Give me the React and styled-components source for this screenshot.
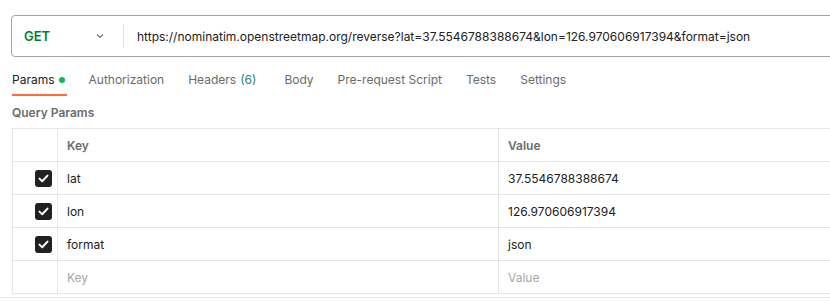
import React from "react";
import styled, { createGlobalStyle } from "styled-components";

const Global = createGlobalStyle`
  html, body { margin: 0; padding: 0; background: #ffffff; }
  body { font-family: Inter, "Noto Sans", sans-serif; color: #212121; overflow: hidden; }
  * { box-sizing: border-box; }
`;

const Page = styled.div`
  width: 830px;
  height: 302px;
  overflow: hidden;
`;

const UrlBar = styled.div`
  margin: 15px 0 0 11px;
  width: 840px;
  height: 42px;
  border: 1px solid #a6a6a6;
  border-radius: 4px;
  display: flex;
  align-items: center;
`;

const Method = styled.div`
  width: 111px;
  display: flex;
  align-items: center;
  justify-content: space-between;
  padding: 0 18px 0 12px;
  font-size: 13px;
  font-weight: 600;
  color: #007f31;
`;

const Divider = styled.div`
  width: 1px;
  height: 24px;
  background: #e0e0e0;
`;

const UrlText = styled.div`
  padding-left: 13px;
  font-size: 12px;
  color: #212121;
  white-space: nowrap;
`;

const Tabs = styled.div`
  display: flex;
  margin-top: 7px;
`;

const Tab = styled.div`
  position: relative;
  padding: 8px 12px 9px;
  padding-left: ${(p) => (p.$wide ? "16px" : "12px")};
  font-size: 12px;
  line-height: 15px;
  color: ${(p) => (p.$active ? "#212121" : "#6b6b6b")};
  display: flex;
  align-items: center;
  &::after {
    content: "";
    display: ${(p) => (p.$active ? "block" : "none")};
    position: absolute;
    left: 12px;
    right: 10px;
    bottom: 0;
    height: 2px;
    background: #ff6c37;
  }
`;

const Dot = styled.span`
  width: 6px;
  height: 6px;
  border-radius: 50%;
  background: #0cbb52;
  margin-left: 4px;
`;

const Count = styled.span`
  color: #2f7f72;
  margin-left: 4px;
`;

const SectionTitle = styled.div`
  margin: 9px 0 0 12px;
  font-size: 12px;
  font-weight: 600;
  line-height: 16px;
  color: #6b6b6b;
`;

const Table = styled.div`
  margin: 7px 0 0 12px;
  width: 840px;
  border-top: 1px solid #e6e6e6;
  border-left: 1px solid #e6e6e6;
`;

const Row = styled.div`
  display: grid;
  grid-template-columns: 45px 441px 1fr;
  height: 33px;
  border-bottom: 1px solid #e6e6e6;
`;

const Cell = styled.div`
  display: flex;
  align-items: center;
  padding-left: ${(p) => (p.$check ? "0" : "9px")};
  justify-content: ${(p) => (p.$check ? "flex-end" : "flex-start")};
  padding-right: ${(p) => (p.$check ? "5px" : "0")};
  border-right: ${(p) => (p.$last ? "none" : "1px solid #e6e6e6")};
  font-size: 12px;
  font-weight: ${(p) => (p.$head ? 600 : 400)};
  color: ${(p) => (p.$head ? "#6b6b6b" : p.$placeholder ? "#a6a6a6" : "#212121")};
`;

const Box = styled.span`
  width: 17px;
  height: 17px;
  border-radius: 3px;
  background: #212121;
  display: flex;
  align-items: center;
  justify-content: center;
`;

const BottomLine = styled.div`
  margin-top: 3px;
  height: 1px;
  background: #e6e6e6;
`;

const Chevron = () => (
  <svg width="10" height="10" viewBox="0 0 10 10">
    <path d="M2 3.5 L5 6.5 L8 3.5" fill="none" stroke="#6b6b6b" strokeWidth="1.1" />
  </svg>
);

const Check = () => (
  <Box>
    <svg width="11" height="9" viewBox="0 0 11 9">
      <path d="M1.5 4.6 L4.2 7.2 L9.5 1.6" fill="none" stroke="#fff" strokeWidth="2" strokeLinecap="round" strokeLinejoin="round" />
    </svg>
  </Box>
);

const params = [
  ["lat", "37.5546788388674"],
  ["lon", "126.970606917394"],
  ["format", "json"],
];

export default function App() {
  return (
    <Page>
      <Global />
      <UrlBar>
        <Method>
          GET
          <Chevron />
        </Method>
        <Divider />
        <UrlText>
          https://nominatim.openstreetmap.org/reverse?lat=37.5546788388674&amp;lon=126.970606917394&amp;format=json
        </UrlText>
      </UrlBar>
      <Tabs>
        <Tab $active>
          Params<Dot />
        </Tab>
        <Tab>Authorization</Tab>
        <Tab>
          Headers<Count>(6)</Count>
        </Tab>
        <Tab $wide>Body</Tab>
        <Tab>Pre-request Script</Tab>
        <Tab>Tests</Tab>
        <Tab>Settings</Tab>
      </Tabs>
      <SectionTitle>Query Params</SectionTitle>
      <Table>
        <Row>
          <Cell $check />
          <Cell $head>Key</Cell>
          <Cell $head $last>Value</Cell>
        </Row>
        {params.map(([k, v]) => (
          <Row key={k}>
            <Cell $check>
              <Check />
            </Cell>
            <Cell>{k}</Cell>
            <Cell $last>{v}</Cell>
          </Row>
        ))}
        <Row>
          <Cell $check />
          <Cell $placeholder>Key</Cell>
          <Cell $placeholder $last>Value</Cell>
        </Row>
      </Table>
      <BottomLine />
    </Page>
  );
}
